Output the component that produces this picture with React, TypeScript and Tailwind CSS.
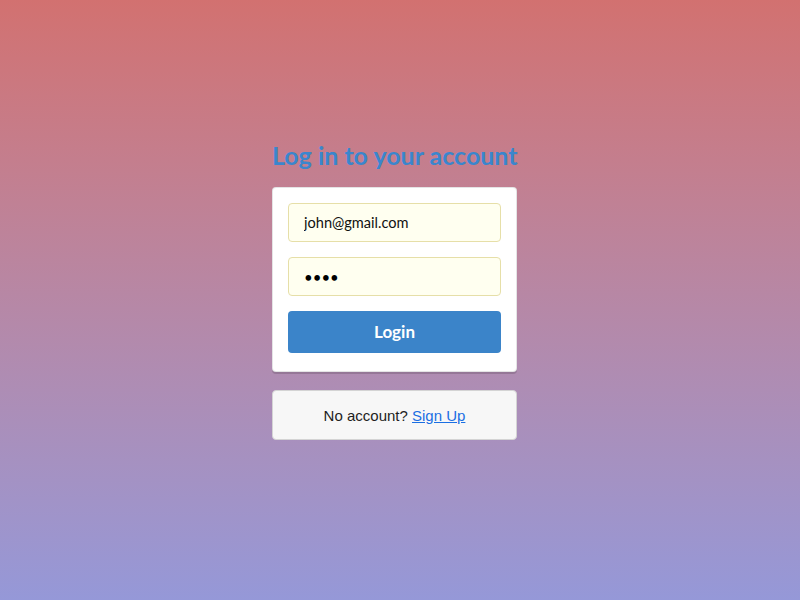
import React from "react";

export default function App() {
  return (
    <div
      className="w-full h-[600px] flex justify-center pr-[11px] bg-gradient-to-b from-[#d27170] to-[#9598d8]"
      style={{ fontFamily: "Lato, 'Open Sans', sans-serif" }}
    >
      <div className="w-[245px] pt-[138px] flex flex-col">
        <h2 className="text-center text-[25px] leading-[34px] font-bold text-[#3a86cd] mb-[15px] whitespace-nowrap">
          Log in to your account
        </h2>
        <div className="bg-white rounded-[4px] border border-[rgba(34,36,38,0.12)] shadow-[0_2px_0_0_rgba(0,0,0,0.15)] px-[15px] pt-[15px] pb-[18px] flex flex-col">
          <input
            readOnly
            value="john@gmail.com"
            className="h-[39px] w-full rounded-[4px] border border-[#e6dfa8] bg-[#fffff0] px-[15px] text-[14.6px] text-[#111] outline-none"
            style={{ fontFamily: "Lato, sans-serif" }}
          />
          <input
            readOnly
            type="password"
            value="1234"
            className="mt-[15px] h-[39px] w-full rounded-[4px] border border-[#e6dfa8] bg-[#fffff0] px-[15px] text-[15px] text-black outline-none"
            style={{ fontFamily: "Lato, sans-serif" }}
          />
          <button className="mt-[15px] h-[42px] w-full rounded-[4px] bg-[#3b84c9] text-white text-[17px] font-bold">
            Login
          </button>
        </div>
        <div
          className="mt-[18px] h-[50px] pt-[2px] rounded-[4px] border border-[#d4d4d4] bg-[#f7f7f7] flex items-center justify-center text-[15px] text-[#1e1e1e]"
          style={{ fontFamily: "'Liberation Sans', Arial, sans-serif" }}
        >
          <span>
            No account?{" "}
            <a href="#" className="text-[#1a6fe3] underline">
              Sign Up
            </a>
          </span>
        </div>
      </div>
    </div>
  );
}
